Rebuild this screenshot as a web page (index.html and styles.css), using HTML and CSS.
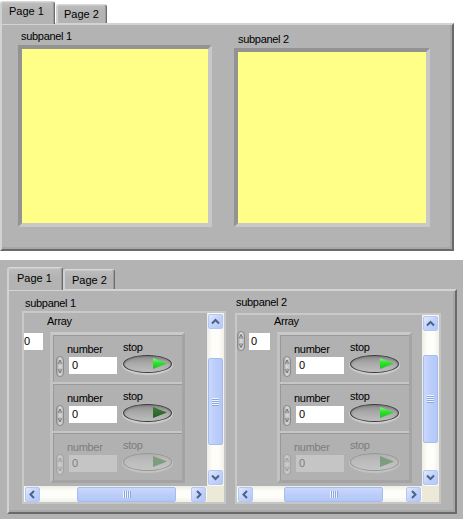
FILE: index.html
```html
<!DOCTYPE html>
<html>
<head>
<meta charset="utf-8">
<link rel="stylesheet" href="styles.css">
</head>
<body>
<div class="top">
  <div class="tabctl t1">
    <div class="tabs">
      <div class="tab active">Page 1</div>
      <div class="tab inactive">Page 2</div>
    </div>
    <div class="tabbody">
      <div class="ycol ycol1">
        <div class="lbl">subpanel 1</div>
        <div class="yframe"></div>
      </div>
      <div class="ycol ycol2">
        <div class="lbl">subpanel 2</div>
        <div class="yframe"></div>
      </div>
    </div>
  </div>
</div>

<div class="bottom">
  <div class="tabctl t2">
    <div class="tabs">
      <div class="tab active">Page 1</div>
      <div class="tab inactive">Page 2</div>
    </div>
    <div class="tabbody">
      <!-- subpanel 1 -->
      <div class="scol scol1">
        <div class="lbl">subpanel 1</div>
        <div class="sframe">
          <div class="srow">
            <div class="viewport">
              <div class="vcontent">
                <div class="idx">
                  <div class="spin"><svg width="8" height="20" viewBox="0 0 8 20"><path d="M2 7.5L4 3.5L6 7.5M4 3.5V8" fill="none" stroke="#707070" stroke-width="0.8"/><path d="M2 12.5L4 16.5L6 12.5M4 16.5V12" fill="none" stroke="#707070" stroke-width="0.8"/></svg></div>
                  <div class="idxval">0</div>
                </div>
                <div class="arr">
                  <div class="lbl arrlbl">Array</div>
                  <div class="shell">
                    <div class="elem">
                      <div class="ecol">
                        <div class="lbl nlbl">number</div>
                        <div class="numrow">
                          <div class="spin"><svg width="8" height="21" viewBox="0 0 8 21"><path d="M2 8L4 4L6 8M4 4V8.5" fill="none" stroke="#707070" stroke-width="0.8"/><path d="M2 13L4 17L6 13M4 17V12.5" fill="none" stroke="#707070" stroke-width="0.8"/></svg></div>
                          <div class="field">0</div>
                        </div>
                      </div>
                      <div class="bcol">
                        <div class="lbl">stop</div>
                        <div class="stopbtn"><div class="tri on"></div></div>
                      </div>
                    </div>
                    <div class="elem">
                      <div class="ecol">
                        <div class="lbl nlbl">number</div>
                        <div class="numrow">
                          <div class="spin"><svg width="8" height="21" viewBox="0 0 8 21"><path d="M2 8L4 4L6 8M4 4V8.5" fill="none" stroke="#707070" stroke-width="0.8"/><path d="M2 13L4 17L6 13M4 17V12.5" fill="none" stroke="#707070" stroke-width="0.8"/></svg></div>
                          <div class="field">0</div>
                        </div>
                      </div>
                      <div class="bcol">
                        <div class="lbl">stop</div>
                        <div class="stopbtn"><div class="tri off"></div></div>
                      </div>
                    </div>
                    <div class="elem dis">
                      <div class="ecol">
                        <div class="lbl nlbl">number</div>
                        <div class="numrow">
                          <div class="spin"><svg width="8" height="21" viewBox="0 0 8 21"><path d="M2 8L4 4L6 8M4 4V8.5" fill="none" stroke="#9a9a9a" stroke-width="0.8"/><path d="M2 13L4 17L6 13M4 17V12.5" fill="none" stroke="#9a9a9a" stroke-width="0.8"/></svg></div>
                          <div class="field">0</div>
                        </div>
                      </div>
                      <div class="bcol">
                        <div class="lbl">stop</div>
                        <div class="stopbtn"><div class="tri off"></div></div>
                      </div>
                    </div>
                  </div>
                </div>
              </div>
            </div>
            <div class="vscroll">
              <div class="sbtn"><svg width="13" height="13" viewBox="0 0 13 13"><path d="M3 8.5L6.5 5L10 8.5" fill="none" stroke="#4d6185" stroke-width="2"/></svg></div>
              <div class="vtrack"><div class="vthumb"><svg width="7" height="8" viewBox="0 0 7 8"><path d="M0 0.5H7M0 2.5H7M0 4.5H7M0 6.5H7" stroke="#eef3fe" stroke-width="1"/><path d="M0 1.5H7M0 3.5H7M0 5.5H7M0 7.5H7" stroke="#8ea6dc" stroke-width="1"/></svg></div></div>
              <div class="sbtn"><svg width="13" height="13" viewBox="0 0 13 13"><path d="M3 4.5L6.5 8L10 4.5" fill="none" stroke="#4d6185" stroke-width="2"/></svg></div>
            </div>
          </div>
          <div class="hrow">
            <div class="hscroll">
              <div class="sbtn"><svg width="13" height="13" viewBox="0 0 13 13"><path d="M8 3L4.5 6.5L8 10" fill="none" stroke="#4d6185" stroke-width="2"/></svg></div>
              <div class="hthumb"><svg width="8" height="7" viewBox="0 0 8 7"><path d="M0.5 0V7M2.5 0V7M4.5 0V7M6.5 0V7" stroke="#eef3fe" stroke-width="1"/><path d="M1.5 0V7M3.5 0V7M5.5 0V7M7.5 0V7" stroke="#8ea6dc" stroke-width="1"/></svg></div>
              <div class="sbtn rbtn"><svg width="13" height="13" viewBox="0 0 13 13"><path d="M5 3L8.5 6.5L5 10" fill="none" stroke="#4d6185" stroke-width="2"/></svg></div>
            </div>
            <div class="corner"></div>
          </div>
        </div>
      </div>

      <!-- subpanel 2 -->
      <div class="scol scol2">
        <div class="lbl">subpanel 2</div>
        <div class="sframe">
          <div class="srow">
            <div class="viewport">
              <div class="vcontent">
                <div class="idx">
                  <div class="spin"><svg width="8" height="20" viewBox="0 0 8 20"><path d="M2 7.5L4 3.5L6 7.5M4 3.5V8" fill="none" stroke="#707070" stroke-width="0.8"/><path d="M2 12.5L4 16.5L6 12.5M4 16.5V12" fill="none" stroke="#707070" stroke-width="0.8"/></svg></div>
                  <div class="idxval">0</div>
                </div>
                <div class="arr">
                  <div class="lbl arrlbl">Array</div>
                  <div class="shell">
                    <div class="elem">
                      <div class="ecol">
                        <div class="lbl nlbl">number</div>
                        <div class="numrow">
                          <div class="spin"><svg width="8" height="21" viewBox="0 0 8 21"><path d="M2 8L4 4L6 8M4 4V8.5" fill="none" stroke="#707070" stroke-width="0.8"/><path d="M2 13L4 17L6 13M4 17V12.5" fill="none" stroke="#707070" stroke-width="0.8"/></svg></div>
                          <div class="field">0</div>
                        </div>
                      </div>
                      <div class="bcol">
                        <div class="lbl">stop</div>
                        <div class="stopbtn"><div class="tri on"></div></div>
                      </div>
                    </div>
                    <div class="elem">
                      <div class="ecol">
                        <div class="lbl nlbl">number</div>
                        <div class="numrow">
                          <div class="spin"><svg width="8" height="21" viewBox="0 0 8 21"><path d="M2 8L4 4L6 8M4 4V8.5" fill="none" stroke="#707070" stroke-width="0.8"/><path d="M2 13L4 17L6 13M4 17V12.5" fill="none" stroke="#707070" stroke-width="0.8"/></svg></div>
                          <div class="field">0</div>
                        </div>
                      </div>
                      <div class="bcol">
                        <div class="lbl">stop</div>
                        <div class="stopbtn"><div class="tri on"></div></div>
                      </div>
                    </div>
                    <div class="elem dis">
                      <div class="ecol">
                        <div class="lbl nlbl">number</div>
                        <div class="numrow">
                          <div class="spin"><svg width="8" height="21" viewBox="0 0 8 21"><path d="M2 8L4 4L6 8M4 4V8.5" fill="none" stroke="#9a9a9a" stroke-width="0.8"/><path d="M2 13L4 17L6 13M4 17V12.5" fill="none" stroke="#9a9a9a" stroke-width="0.8"/></svg></div>
                          <div class="field">0</div>
                        </div>
                      </div>
                      <div class="bcol">
                        <div class="lbl">stop</div>
                        <div class="stopbtn"><div class="tri off"></div></div>
                      </div>
                    </div>
                  </div>
                </div>
              </div>
            </div>
            <div class="vscroll">
              <div class="sbtn"><svg width="13" height="13" viewBox="0 0 13 13"><path d="M3 8.5L6.5 5L10 8.5" fill="none" stroke="#4d6185" stroke-width="2"/></svg></div>
              <div class="vtrack"><div class="vthumb"><svg width="7" height="8" viewBox="0 0 7 8"><path d="M0 0.5H7M0 2.5H7M0 4.5H7M0 6.5H7" stroke="#eef3fe" stroke-width="1"/><path d="M0 1.5H7M0 3.5H7M0 5.5H7M0 7.5H7" stroke="#8ea6dc" stroke-width="1"/></svg></div></div>
              <div class="sbtn"><svg width="13" height="13" viewBox="0 0 13 13"><path d="M3 4.5L6.5 8L10 4.5" fill="none" stroke="#4d6185" stroke-width="2"/></svg></div>
            </div>
          </div>
          <div class="hrow">
            <div class="hscroll">
              <div class="sbtn"><svg width="13" height="13" viewBox="0 0 13 13"><path d="M8 3L4.5 6.5L8 10" fill="none" stroke="#4d6185" stroke-width="2"/></svg></div>
              <div class="hthumb"><svg width="8" height="7" viewBox="0 0 8 7"><path d="M0.5 0V7M2.5 0V7M4.5 0V7M6.5 0V7" stroke="#eef3fe" stroke-width="1"/><path d="M1.5 0V7M3.5 0V7M5.5 0V7M7.5 0V7" stroke="#8ea6dc" stroke-width="1"/></svg></div>
              <div class="sbtn rbtn"><svg width="13" height="13" viewBox="0 0 13 13"><path d="M5 3L8.5 6.5L5 10" fill="none" stroke="#4d6185" stroke-width="2"/></svg></div>
            </div>
            <div class="corner"></div>
          </div>
        </div>
      </div>
    </div>
  </div>
</div>
</body>
</html>
```

FILE: styles.css
```css
* { box-sizing: border-box; }
html, body { margin: 0; padding: 0; }
body {
  width: 463px;
  height: 519px;
  overflow: hidden;
  background: #ffffff;
  font-family: "Liberation Sans", Arial, sans-serif;
  font-size: 11px;
  color: #000;
}
.lbl {
  line-height: 13px;
  height: 13px;
  white-space: nowrap;
  letter-spacing: -0.3px;
}

/* ---------- tab controls ---------- */
.top { height: 260px; padding-top: 1px; }
.bottom { height: 259px; background: #b3b3b3; padding: 7px 0 0 7px; }

.tabctl { display: flex; flex-direction: column; }
.t1 { width: 454px; }
.t2 { width: 450px; }

.tabs { display: flex; align-items: flex-start; position: relative; z-index: 2; height: 23px; }
.tab {
  background: linear-gradient(#bdbdbd, #b3b3b3 40%);
  border-top: 1px solid #d8d8d8;
  border-left: 2px solid #d0d0d0;
  border-right: 1px solid #6c6c6c;
  box-shadow: inset -1px 0 0 #9a9a9a, inset 0 1px 0 #c9c9c9;
  border-radius: 3px 3px 0 0;
  line-height: 13px;
  white-space: nowrap;
}
.tab.active { height: 23px; }
.t1 .tab.active { width: 55px; padding: 3px 0 0 7px; }
.t1 .tab.inactive { width: 51px; height: 19px; margin: 3px 0 0 1px; padding: 3px 0 0 6px; }
.t2 .tab.active { width: 56px; padding: 4px 0 0 8px; }
.t2 .tab.inactive { width: 52px; height: 20px; margin-top: 2px; padding: 4px 0 0 7px; }

.tabbody {
  margin-top: -1px;
  background: #b3b3b3;
  border: 2px solid;
  border-color: #d3d3d3 #6a6a6a #6a6a6a #d3d3d3;
  box-shadow: inset -2px -2px 0 #a7a7a7;
  display: flex;
  align-items: flex-start;
}
.t1 .tabbody { height: 228px; }
.t2 .tabbody { height: 225px; }

/* ---------- top: yellow subpanels ---------- */
.ycol1 { margin-left: 16px; padding-top: 5px; width: 194px; }
.ycol2 { margin-left: 22px; padding-top: 8px; width: 196px; }
.ycol1 .lbl { margin-left: 3px; }
.ycol2 .lbl { margin-left: 4px; }
.yframe {
  margin-top: 2px;
  background: #ffff88;
  border: 4px solid;
  border-color: #939393 #c8c8c8 #c8c8c8 #939393;
}
.ycol1 .yframe { height: 182px; }
.ycol2 .yframe { height: 179px; }

/* ---------- bottom: subpanels with arrays ---------- */
.scol1 { margin-left: 13px; padding-top: 6px; width: 204px; }
.scol2 { margin-left: 9px; padding-top: 5px; width: 206px; }
.scol1 > .lbl { margin-left: 3px; }
.scol2 > .lbl { margin-left: 1px; }
.sframe {
  border: 2px solid;
  border-color: #c9c9c9 #c6c6c6 #c6c6c6 #c9c9c9;
  display: flex;
  flex-direction: column;
}
.scol1 .sframe { margin-top: 1px; height: 193px; }
.scol2 .sframe { margin-top: 4px; height: 191px; }
.srow { display: flex; }
.scol1 .srow { height: 173px; }
.scol2 .srow { height: 171px; }
.viewport { overflow: hidden; background: #b3b3b3; }
.scol1 .viewport { width: 183px; }
.scol2 .viewport { width: 185px; }
.vcontent { display: flex; align-items: flex-start; }
.scol1 .vcontent { margin-left: -14px; padding-top: 2px; }

.idx { display: flex; align-items: flex-start; gap: 4px; width: 40px; margin-top: 16px; flex: none; }
.idx .spin { height: 20px; }
.idxval {
  width: 21px; height: 17px; margin-top: 2px;
  background: #fff;
  padding-left: 2px;
  line-height: 17px;
}
.arr { display: flex; flex-direction: column; flex: none; }
.arrlbl { margin-left: -3px; }
.shell {
  margin-top: 4px;
  width: 135px;
  border: 3px solid;
  border-color: #cacaca #a4a4a4 #a4a4a4 #c2c2c2;
  background: #c6c6c6;
  display: flex;
  flex-direction: column;
  gap: 2px;
}
.elem {
  height: 47px;
  background: #b1b1b1;
  border-top: 1px solid #999;
  border-left: 1px solid #999;
  padding: 5px 0 0 2px;
  display: flex;
  align-items: flex-start;
}
.ecol { padding-top: 2px; width: 61px; }
.nlbl { margin-left: 11px; }
.numrow { display: flex; align-items: flex-start; gap: 5px; }
.spin {
  width: 8px; height: 21px;
  border: 1px solid #8a8a8a;
  border-radius: 4px;
  background: linear-gradient(90deg, #a6a6a6, #dadada 45%, #bdbdbd);
  display: flex;
  overflow: hidden;
}
.spin svg { margin: -1px 0 0 -1px; flex: none; }
.field {
  width: 48px; height: 17px; margin-top: 1px;
  background: #fff;
  padding-left: 3px;
  line-height: 17px;
}
.bcol { margin-left: 6px; }
.stopbtn {
  margin-top: 1px;
  width: 49px; height: 18px;
  border: 1px solid #3a3a3a;
  border-radius: 50%;
  background: linear-gradient(#8f8f8f, #a9a9a9 45%, #bdbdbd);
  box-shadow: 0 1px 1px 1px #cfcfcf, inset 0 1px 2px #7c7c7c;
  padding: 2px 0 0 29px;
}
.tri {
  width: 14px; height: 11px;
  clip-path: polygon(0 0, 100% 50%, 0 100%);
}
.tri.on { background: linear-gradient(#7dff7d, #2de02d 45%, #22c022); }
.tri.off { background: linear-gradient(#3d7d3d, #245f24); }

.elem.dis .lbl { color: #7d7d7d; }
.elem.dis .field { background: #c5c5c5; color: #7d7d7d; }
.elem.dis .spin { border-color: #a3a3a3; background: linear-gradient(90deg, #b4b4b4, #cfcfcf 45%, #bcbcbc); }
.elem.dis .stopbtn {
  border-color: #959595;
  background: linear-gradient(#b0b0b0, #bcbcbc 45%, #c4c4c4);
  box-shadow: 0 1px 1px 1px #c4c4c4;
}
.elem.dis .tri { background: #7e9c7e; }

/* ---------- XP scrollbars ---------- */
.vscroll {
  width: 17px;
  display: flex;
  flex-direction: column;
  padding: 1px 1px;
  background: linear-gradient(90deg, #eeede5, #fdfdfa 30%, #fdfdfa 70%, #f1efe7);
}
.vtrack { flex: 1; display: flex; flex-direction: column; }
.sbtn {
  width: 15px; height: 15px;
  flex: none;
  border: 1px solid #b4c7f4;
  border-radius: 2px;
  background: linear-gradient(135deg, #e1e9fd, #c2d3fb 50%, #b4c8f7);
  display: flex;
  align-items: center;
  justify-content: center;
}
.vthumb, .hthumb {
  border: 1px solid #a6bcee;
  border-radius: 2px;
  background: linear-gradient(90deg, #c9d8fc, #bccdfa 50%, #b3c7f7);
  display: flex;
  align-items: center;
  justify-content: center;
}
.vthumb { width: 15px; }
.scol1 .vthumb { margin-top: 29px; height: 87px; }
.scol2 .vthumb { margin-top: 24px; height: 88px; }
.hrow { display: flex; height: 16px; }
.hscroll {
  display: flex;
  padding: 1px 1px 0 1px;
  background: linear-gradient(#eeede5, #fdfdfa 30%, #fdfdfa 70%, #f1efe7);
}
.scol1 .hscroll { width: 183px; }
.scol2 .hscroll { width: 185px; }
.hthumb { height: 15px; width: 99px; background: linear-gradient(#c9d8fc, #bccdfa 50%, #b3c7f7); }
.scol1 .hthumb { margin-left: 37px; }
.scol2 .hthumb { margin-left: 31px; }
.rbtn { margin-left: auto; }
.corner { width: 17px; background: #ece9d8; }
```
